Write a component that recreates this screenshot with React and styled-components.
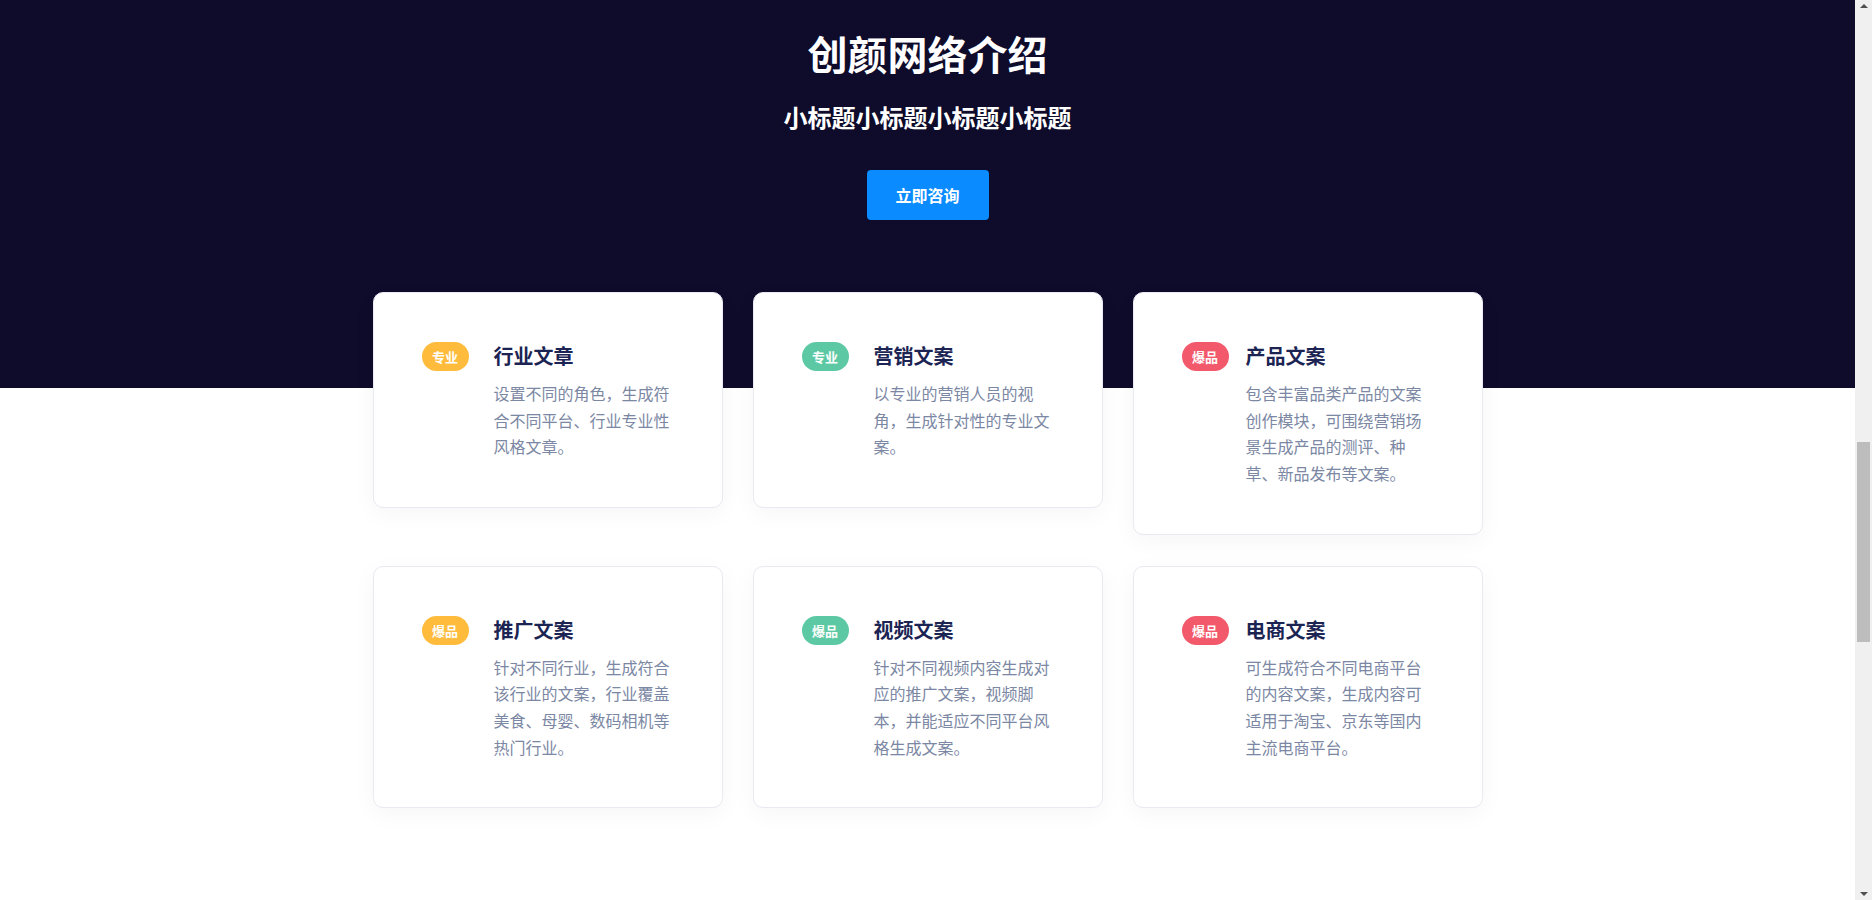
import React from 'react';
import styled, { createGlobalStyle } from 'styled-components';

const GlobalStyle = createGlobalStyle`
  body {
    margin: 0;
    background: #ffffff;
    font-family: "Noto Sans CJK SC", "Noto Sans", "Liberation Sans", sans-serif;
  }
`;

const BADGE_COLORS = {
  yellow: '#ffbb3c',
  green: '#5dc9a4',
  red: '#f2596b',
};

const services = [
  {
    tag: '专业',
    color: 'yellow',
    title: '行业文章',
    text: '设置不同的角色，生成符合不同平台、行业专业性风格文章。',
  },
  {
    tag: '专业',
    color: 'green',
    title: '营销文案',
    text: '以专业的营销人员的视角，生成针对性的专业文案。',
  },
  {
    tag: '爆品',
    color: 'red',
    title: '产品文案',
    text: '包含丰富品类产品的文案创作模块，可围绕营销场景生成产品的测评、种草、新品发布等文案。',
  },
  {
    tag: '爆品',
    color: 'yellow',
    title: '推广文案',
    text: '针对不同行业，生成符合该行业的文案，行业覆盖美食、母婴、数码相机等热门行业。',
  },
  {
    tag: '爆品',
    color: 'green',
    title: '视频文案',
    text: '针对不同视频内容生成对应的推广文案，视频脚本，并能适应不同平台风格生成文案。',
  },
  {
    tag: '爆品',
    color: 'red',
    title: '电商文案',
    text: '可生成符合不同电商平台的内容文案，生成内容可适用于淘宝、京东等国内主流电商平台。',
  },
];

function App() {
  return (
    <>
      <GlobalStyle />
      <Page>
        <Hero>
          <HeroTitle>创颜网络介绍</HeroTitle>
          <HeroSubtitle>小标题小标题小标题小标题</HeroSubtitle>
          <ConsultButton type='button'>立即咨询</ConsultButton>
        </Hero>

        <CardGrid>
          {services.map((item, i) => (
            <Card key={item.title}>
              <Badge $color={BADGE_COLORS[item.color]}>{item.tag}</Badge>
              <CardBody $tight={i % 3 === 2}>
                <CardTitle>{item.title}</CardTitle>
                <CardText>{item.text}</CardText>
              </CardBody>
            </Card>
          ))}
        </CardGrid>
      </Page>

      {/* window scrollbar, drawn over the right edge */}
      <ScrollTrack>
        <ScrollArrow $dir='up' />
        <ScrollThumb />
        <ScrollArrow $dir='down' />
      </ScrollTrack>
    </>
  );
}

const Page = styled.div`
  width: calc(100% - 17px);
  padding-bottom: 60px;
`;

const Hero = styled.section`
  background: #0e0b2b;
  display: flex;
  flex-direction: column;
  align-items: center;
  padding: 29px 0 168px;
`;

const HeroTitle = styled.h1`
  margin: 0;
  font-size: 40px;
  line-height: 48px;
  font-weight: 700;
  color: #ffffff;
`;

const HeroSubtitle = styled.h2`
  margin: 22px 0 0;
  font-size: 24px;
  line-height: 36px;
  font-weight: 700;
  color: #ffffff;
`;

const ConsultButton = styled.button`
  margin-top: 35px;
  width: 122px;
  height: 50px;
  border: none;
  border-radius: 4px;
  background: #0a8bff;
  color: #ffffff;
  font-family: inherit;
  font-size: 16px;
  font-weight: 700;
  cursor: pointer;
`;

const CardGrid = styled.div`
  width: 1110px;
  margin: -96px auto 0;
  display: grid;
  grid-template-columns: repeat(3, 350px);
  column-gap: 30px;
  row-gap: 31px;
  align-items: start;
`;

const Card = styled.div`
  background: #ffffff;
  border: 1px solid #e9e9f1;
  border-radius: 10px;
  box-shadow: 0 6px 24px rgba(20, 20, 60, 0.04);
  padding: 48px 47px 47px 48px;
  display: flex;
  align-items: flex-start;
`;

const Badge = styled.span`
  flex: 0 0 47px;
  height: 29px;
  margin-top: 1px;
  border-radius: 15px;
  background: ${(p) => p.$color};
  color: #ffffff;
  font-size: 13px;
  font-weight: 700;
  line-height: 29px;
  text-align: center;
`;

const CardBody = styled.div`
  margin-left: ${(p) => (p.$tight ? '17px' : '25px')};
  width: 180px;
`;

const CardTitle = styled.h3`
  margin: 0;
  font-size: 20px;
  line-height: 29px;
  font-weight: 700;
  color: #1b2452;
`;

const CardText = styled.p`
  margin: 10px 0 0;
  font-size: 16px;
  line-height: 26.67px;
  color: #7b87a3;
`;

const ScrollTrack = styled.div`
  position: fixed;
  top: 0;
  right: 0;
  bottom: 0;
  width: 17px;
  background: #f0f0f0;
  display: flex;
  flex-direction: column;
  align-items: center;
`;

const ScrollArrow = styled.span`
  width: 0;
  height: 0;
  border-left: 4px solid transparent;
  border-right: 4px solid transparent;
  ${(p) =>
    p.$dir === 'up'
      ? 'border-bottom: 4px solid #505050; margin-top: 4px;'
      : 'border-top: 4px solid #505050; margin-bottom: 4px; margin-top: auto;'}
`;

const ScrollThumb = styled.span`
  width: 13px;
  height: 200px;
  margin-top: 434px;
  background: #bdbdbd;
`;

export default App;
